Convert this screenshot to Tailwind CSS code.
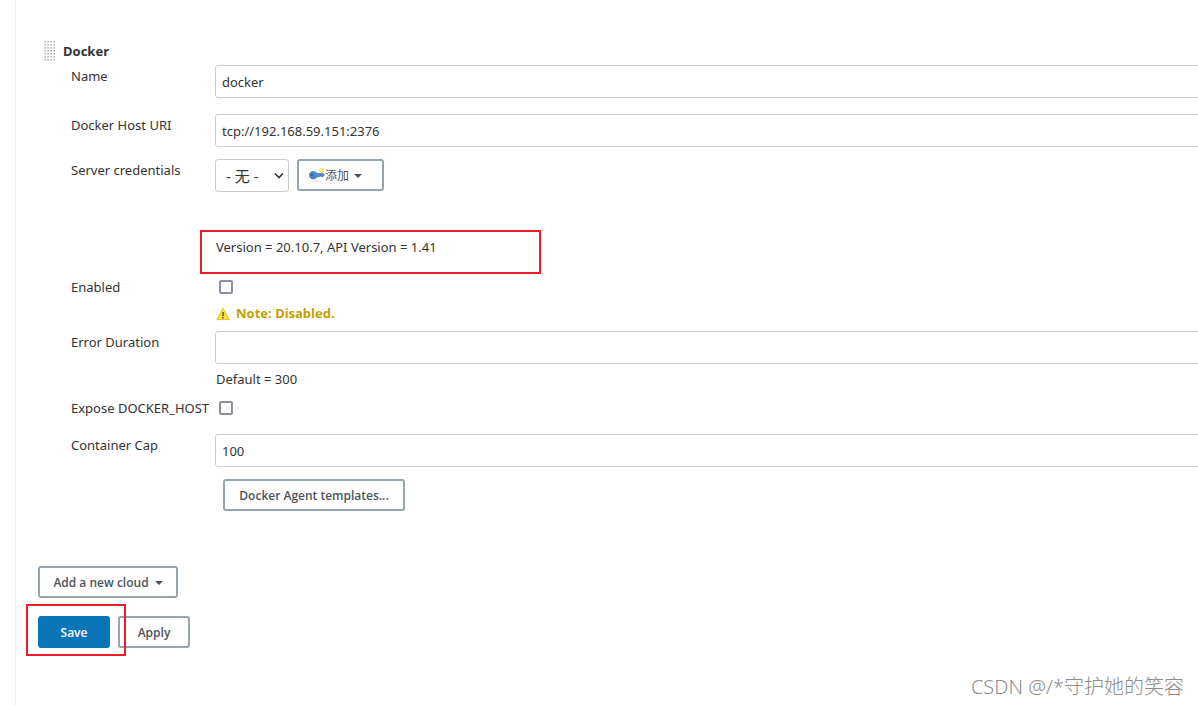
<!DOCTYPE html>
<html lang="zh">
<head>
<meta charset="utf-8">
<title>Docker</title>
<script src="https://cdn.jsdelivr.net/npm/@tailwindcss/browser@4"></script>
</head>
<body class="min-h-screen overflow-x-hidden bg-white pl-[15px] font-['Noto_Sans','Noto_Sans_CJK_SC',sans-serif] text-[13px] leading-[22px] text-[#333]">
<main class="relative min-h-screen border-l border-[#efeff5] pt-10 pl-[22px]">
  <form>
    <section class="pl-[6px]">
      <header class="flex h-[22px] items-center gap-2">
        <svg class="h-5 w-[11px]" viewBox="0 0 11 20" aria-hidden="true">
          <defs><pattern id="dots" width="3" height="3" patternUnits="userSpaceOnUse"><rect width="2" height="2" fill="#d8d8d4"/><rect x="1" y="0" width="1" height="1" fill="#b4b4ae"/></pattern></defs>
          <rect width="11" height="20" fill="url(#dots)"/>
        </svg>
        <h1 class="text-[13px] font-bold">Docker</h1>
      </header>

      <div class="mt-[3px] pl-[27px]">
        <div class="flex h-[33px] items-start">
          <label for="name" class="w-36 shrink-0">Name</label>
          <input id="name" value="docker" class="-mr-2 h-[33px] min-w-0 flex-1 rounded-[3px] border border-[#ccc] px-[6px]">
        </div>
        <div class="mt-4 flex h-[33px] items-start">
          <label for="uri" class="w-36 shrink-0">Docker Host URI</label>
          <input id="uri" value="tcp://192.168.59.151:2376" class="-mr-2 h-[33px] min-w-0 flex-1 rounded-[3px] border border-[#ccc] px-[6px]">
        </div>
        <div class="mt-3 flex h-[33px] items-start">
          <label for="cred" class="w-36 shrink-0">Server credentials</label>
          <div class="relative">
            <select id="cred" class="h-[33px] w-[74px] appearance-none rounded-[3px] border border-[#ccc] bg-white pl-[10px] text-[15px]"><option>- 无 -</option></select>
            <svg class="pointer-events-none absolute top-3 right-[5px] h-[9px] w-[10px]" viewBox="0 0 10 9" fill="none" stroke="#333" stroke-width="1.6" aria-hidden="true"><path d="M1 2.5l4 4 4-4"/></svg>
          </div>
          <button type="button" class="ml-2 flex h-8 w-[87px] items-center rounded-[3px] border-2 border-[#98a4ac] bg-white pt-[2px] pl-[10px] text-xs text-[#4b545a]">
            <svg class="h-4 w-4" viewBox="0 0 16 16" aria-hidden="true">
              <ellipse cx="7" cy="13" rx="6" ry="1" fill="#eee"/>
              <path d="M4 3.500c2 0 3.400.8 4 2l6-.2 1.500 1.400L14 8.800h-1.500l-1-.8-1 .8H8C7.400 10.200 6 11 4 11 1.800 11 .400 9.300.400 7.200S1.800 3.500 4 3.500z" fill="#4f87c6" stroke="#3669a8" stroke-width=".6"/>
              <circle cx="2.800" cy="7" r="1" fill="#2a568e"/>
              <path d="M12 -1l1 1.500 2-.5-.5 2 1 1-1.500 1-.5 1.500-1.500-1-2 .5.500-2-1.500-1 2-.8z" fill="#fce94f"/><circle cx="12.200" cy="2" r="1" fill="#fff8c0"/>
            </svg>添加
            <svg class="ml-[5px] h-1 w-2" viewBox="0 0 8 4" aria-hidden="true"><path d="M0 0h8L4 4z" fill="#4b545a"/></svg>
          </button>
        </div>
      </div>

      <div class="mt-[38px] ml-[156px] h-11 w-[341px] border-2 border-[#ee1c24] px-[14px] pt-[4px]">Version = 20.10.7, API Version = 1.41</div>

      <div class="mt-[2px] pl-[27px]">
        <div class="flex h-[22px] items-center">
          <label for="enabled" class="w-[148px] shrink-0">Enabled</label>
          <input id="enabled" type="checkbox" class="h-[14px] w-[14px] appearance-none rounded-[2px] border-2 border-[#8f8f9d]">
        </div>
        <div class="mt-1 ml-[145px] flex h-[22px] items-center gap-[6px] font-bold text-[#c4a000]">
          <svg class="mt-[2px] h-[14px] w-[14px]" viewBox="0 0 14 14" aria-hidden="true">
            <path d="M7 1.200L13.300 12.600H.700z" fill="#fbe04a" stroke="#e3c62c" stroke-linejoin="round"/>
            <path d="M7 5v4M7 10v1.500" stroke="#5f5620" stroke-width="1.500"/>
          </svg>Note: Disabled.
        </div>
        <div class="mt-[7px] flex h-[33px] items-start">
          <label for="duration" class="w-36 shrink-0">Error Duration</label>
          <input id="duration" class="-mr-2 h-[33px] min-w-0 flex-1 rounded-[3px] border border-[#ccc] px-[6px]">
        </div>
        <p class="mt-1 ml-[145px]">Default = 300</p>
        <div class="mt-[7px] flex h-[22px] items-center">
          <label for="expose" class="w-[148px] shrink-0">Expose DOCKER_HOST</label>
          <input id="expose" type="checkbox" class="h-[14px] w-[14px] appearance-none rounded-[2px] border-2 border-[#8f8f9d]">
        </div>
        <div class="mt-[15px] flex h-[33px] items-start">
          <label for="cap" class="w-36 shrink-0">Container Cap</label>
          <input id="cap" value="100" class="-mr-2 h-[33px] min-w-0 flex-1 rounded-[3px] border border-[#ccc] px-[6px]">
        </div>
        <button type="button" class="mt-3 ml-[152px] block h-8 w-[182px] rounded-[3px] border-2 border-[#98a4ac] pt-[2px] font-['Open_Sans',sans-serif] text-xs font-semibold text-[#4b545a]">Docker Agent templates...</button>
      </div>
    </section>

    <button type="button" class="mt-[55px] flex h-8 w-[140px] items-center justify-center gap-[6px] rounded-[3px] border-2 border-[#98a4ac] pt-[2px] font-['Open_Sans',sans-serif] text-xs font-semibold text-[#4b545a]">Add a new cloud
      <svg class="h-1 w-2" viewBox="0 0 8 4" aria-hidden="true"><path d="M0 0h8L4 4z" fill="#4b545a"/></svg>
    </button>
    <div class="relative mt-[18px] flex gap-2 font-['Open_Sans',sans-serif] text-xs font-semibold">
      <button type="submit" class="h-8 w-[72px] rounded-[3px] bg-[#0b76b7] pt-[2px] text-white">Save</button>
      <button type="button" class="h-8 w-[72px] rounded-[3px] border-2 border-[#98a4ac] pt-[2px] text-[#4b545a]">Apply</button>
      <div class="pointer-events-none absolute -top-3 -left-3 h-[52px] w-[100px] border-2 border-[#ee1c24]"></div>
    </div>
  </form>
  <div class="absolute right-[14px] bottom-[6px] text-xl leading-6 text-[#8d8d8d] font-light">CSDN @/*守护她的笑容</div>
</main>
</body>
</html>
